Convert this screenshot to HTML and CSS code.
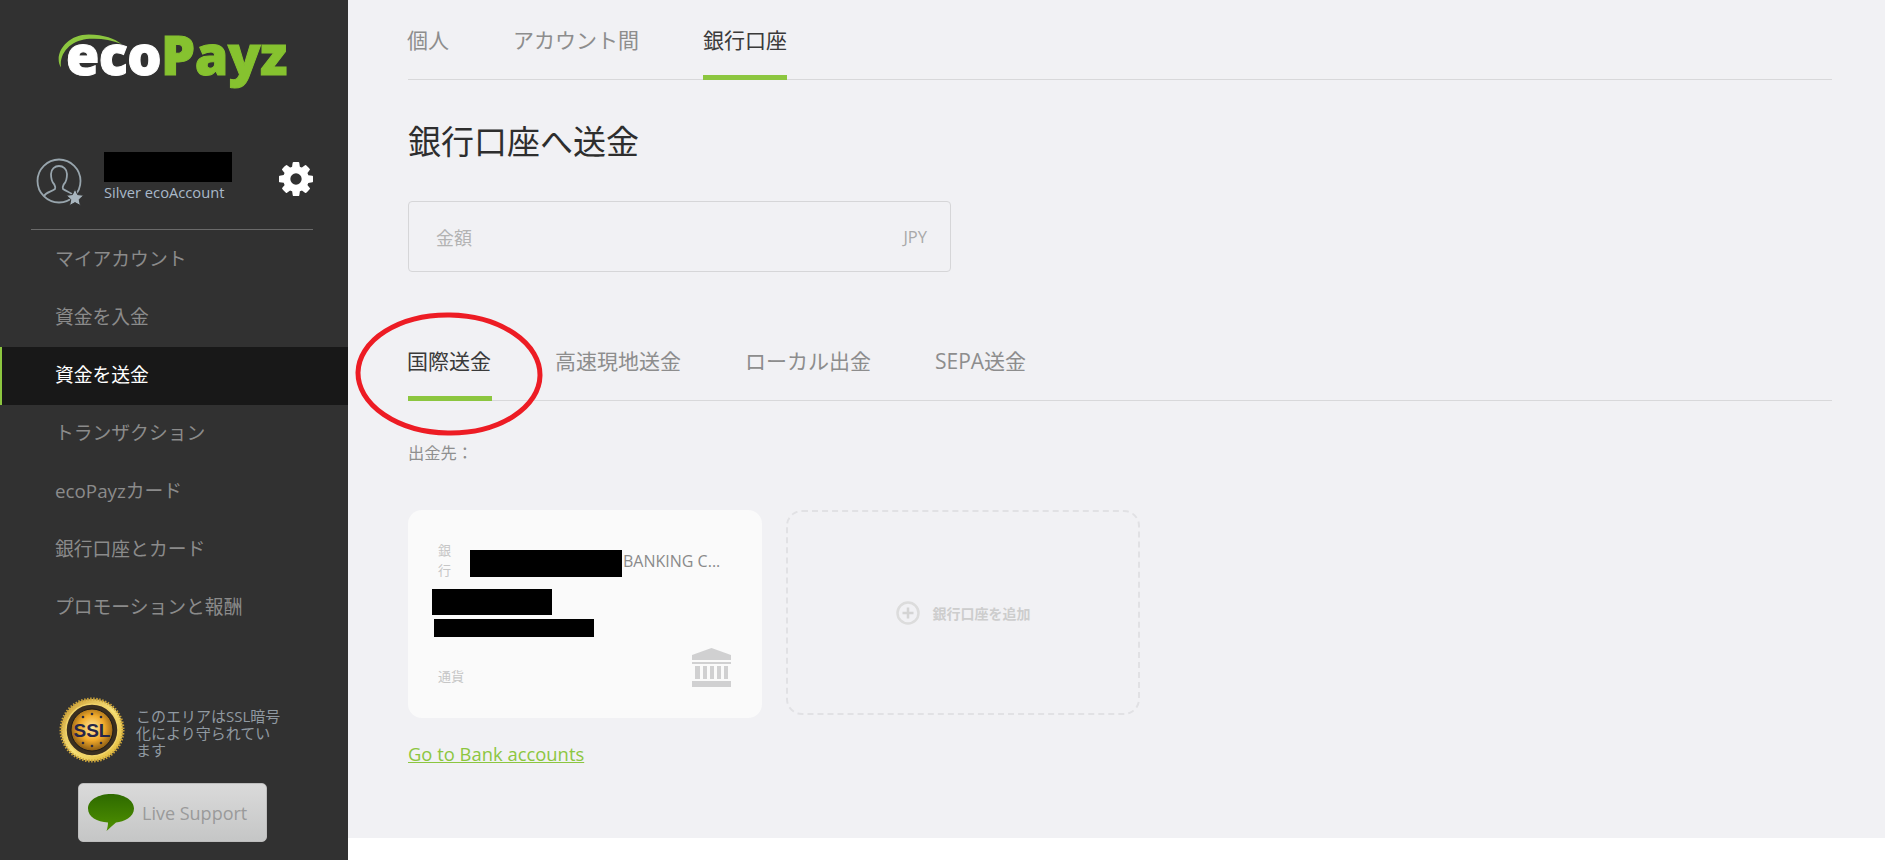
FILE: index.html
```html
<!DOCTYPE html>
<html lang="ja">
<head>
<meta charset="utf-8">
<title>ecoPayz</title>
<link rel="stylesheet" href="styles.css">
</head>
<body>
<div class="page">
  <aside class="sidebar">
    <div class="logo">
      <svg class="logo-arc" viewBox="0 0 90 40" aria-hidden="true"><path d="M8 39C-1 24 14 1 40 1c18 0 30 5 38 11C66 7 52 5 41 6 22 7 6 20 8 39z" fill="#8cc63f"/></svg>
      <span class="logo-eco">eco</span><span class="logo-payz">Payz</span>
    </div>
    <div class="user">
      <svg class="user-icon" viewBox="0 0 54 54" aria-hidden="true">
        <circle cx="23" cy="23" r="21.5" fill="none" stroke="#98a5ad" stroke-width="1.8"/>
        <path d="M8 38c2-4 7-4 11-7 1-2 0-3-1-5-2-2-3-6-3-10 0-5 4-8 8-8s8 3 8 8c0 4-1 8-3 10-1 2-2 3-1 5 3 2 6 3 9 5" fill="none" stroke="#98a5ad" stroke-width="1.8"/>
        <path d="M39 31l2.6 5.6 6.1.7-4.5 4.2 1.2 6.1-5.4-3-5.4 3 1.2-6.1-4.5-4.2 6.1-.7z" fill="#a9b6bf" stroke="#313131" stroke-width="1"/>
      </svg>
      <div class="user-info">
        <div class="redact redact-name"></div>
        <div class="user-level">Silver ecoAccount</div>
      </div>
      <svg class="gear" viewBox="128 128 1536 1536" aria-hidden="true"><path fill="#fff" d="M1152 896q0-106-75-181t-181-75-181 75-75 181 75 181 181 75 181-75 75-181zm512-109v222q0 12-8 23t-20 13l-185 28q-19 54-39 91 35 50 107 138 10 12 10 25t-9 23q-27 37-99 108t-94 71q-12 0-26-9l-138-108q-44 23-91 38-16 136-29 186-7 28-36 28h-222q-14 0-24.5-8.5t-11.5-21.5l-28-184q-49-16-90-37l-141 107q-10 9-25 9-14 0-25-11-126-114-165-168-7-10-7-23 0-12 8-23 15-21 51-66.5t54-70.5q-27-50-41-99l-183-27q-13-2-21-12.5t-8-23.5v-222q0-12 8-23t19-13l186-28q14-46 39-92-40-57-107-138-10-12-10-24 0-10 9-23 26-36 98.5-107.5t94.5-71.5q13 0 26 10l138 107q44-23 91-38 16-136 29-186 7-28 36-28h222q14 0 24.5 8.5t11.5 21.5l28 184q49 16 90 37l142-107q9-9 24-9 13 0 25 10 129 119 165 170 7 8 7 22 0 12-8 23-15 21-51 66.5t-54 70.5q26 50 41 98l183 28q13 2 21 12.5t8 23.5z"/></svg>
    </div>
    <nav class="menu">
      <a class="menu-item">マイアカウント</a>
      <a class="menu-item">資金を入金</a>
      <a class="menu-item is-active">資金を送金</a>
      <a class="menu-item">トランザクション</a>
      <a class="menu-item">ecoPayzカード</a>
      <a class="menu-item">銀行口座とカード</a>
      <a class="menu-item">プロモーションと報酬</a>
    </nav>
    <div class="ssl">
      <svg class="ssl-badge" viewBox="0 0 66 66" aria-hidden="true">
        <defs>
          <radialGradient id="sslGold" cx="50%" cy="45%" r="55%">
            <stop offset="0" stop-color="#ffe9a0"/>
            <stop offset=".55" stop-color="#f0a92a"/>
            <stop offset="1" stop-color="#8a5a12"/>
          </radialGradient>
          <linearGradient id="sslRim" x1="0" y1="0" x2="1" y2="1">
            <stop offset="0" stop-color="#c9962e"/>
            <stop offset=".5" stop-color="#f7e27a"/>
            <stop offset="1" stop-color="#e0b531"/>
          </linearGradient>
        </defs>
        <circle cx="33" cy="33" r="31" fill="url(#sslRim)" stroke="#c9a23a" stroke-width="3" stroke-dasharray="1.5 1.5"/>
        <circle cx="33" cy="33" r="26" fill="#3a2f20" stroke="#f2d469" stroke-width="1.5"/>
        <circle cx="33" cy="33" r="21" fill="url(#sslGold)" stroke="#1d1a18" stroke-width="1"/>
        <g fill="#2a2a40"><circle cx="33" cy="17" r="1.3"/><circle cx="24" cy="20" r="1.3"/><circle cx="42" cy="20" r="1.3"/><circle cx="33" cy="49" r="1.3"/><circle cx="24" cy="46" r="1.3"/><circle cx="42" cy="46" r="1.3"/></g>
        <text class="ssl-text" x="33" y="40" text-anchor="middle">SSL</text>
      </svg>
      <p class="ssl-note">このエリアはSSL暗号化により守られています</p>
    </div>
    <div class="live">
      <svg class="live-bubble" viewBox="0 0 46 37" aria-hidden="true">
        <defs><linearGradient id="bubbleGreen" x1="0" y1="0" x2="0" y2="1"><stop offset="0" stop-color="#2e6a00"/><stop offset="1" stop-color="#4f9100"/></linearGradient></defs>
        <path d="M23 0c12.500 0 23 6 23 14.500S36 28 28 28.500C25 31 22 34 18.500 37c1-3 1.500-6 1.500-8.500C9 28 0 23 0 14.500S10.500 0 23 0z" fill="url(#bubbleGreen)"/>
      </svg>
      <span class="live-text">Live Support</span>
    </div>
  </aside>

  <div class="main-wrap">
    <main class="main">
      <div class="tabs tabs-top">
        <a class="tab">個人</a>
        <a class="tab">アカウント間</a>
        <a class="tab is-active">銀行口座</a>
      </div>
      <h1 class="title">銀行口座へ送金</h1>
      <div class="amount">
        <span class="amount-label">金額</span>
        <span class="amount-cur">JPY</span>
      </div>
      <div class="tabs tabs-sub">
        <a class="tab is-active">国際送金</a>
        <a class="tab">高速現地送金</a>
        <a class="tab">ローカル出金</a>
        <a class="tab">SEPA送金</a>
      </div>
      <p class="dest">出金先：</p>
      <div class="cards">
        <div class="card">
          <div class="card-bank">
            <span class="card-label card-label-narrow">銀行</span>
            <div class="redact redact-bank"></div>
            <span class="card-bank-name">BANKING C...</span>
          </div>
          <div class="redact redact-line1"></div>
          <div class="redact redact-line2"></div>
          <div class="card-foot">
            <span class="card-label">通貨</span>
            <svg class="bank-icon" viewBox="0 0 39 39" aria-hidden="true">
              <path d="M19.500 0L39 7v5H0V7z" fill="#d0d0d1"/>
              <path d="M0 14h39v2H0zM3 18h5v13H3zM11 18h4v13h-4zM18 18h4v13h-4zM25 18h4v13h-4zM32 18h4v13h-4zM0 33h39v6H0z" fill="#d0d0d1"/>
            </svg>
          </div>
        </div>
        <div class="add-card">
          <svg class="add-icon" viewBox="0 0 24 24" aria-hidden="true">
            <circle cx="12" cy="12" r="10.500" fill="none" stroke="#dcdcdc" stroke-width="2.500"/>
            <path d="M12 6.500v11M6.500 12h11" stroke="#d4d4d4" stroke-width="2.500"/>
          </svg>
          <span class="add-text">銀行口座を追加</span>
        </div>
      </div>
      <a class="bank-link">Go to Bank accounts</a>
      <svg class="circle-mark" viewBox="0 0 190 126" aria-hidden="true">
        <ellipse cx="94" cy="63" rx="91" ry="59" fill="none" stroke="#ed1c24" stroke-width="5" transform="rotate(1 94 63)"/>
      </svg>
    </main>
  </div>
</div>
</body>
</html>
```

FILE: styles.css
```css
* { box-sizing: border-box; }
html, body { margin: 0; padding: 0; height: 100%; overflow: hidden; background: #fff; }
body { font-family: "Open Sans", "Noto Sans CJK JP", sans-serif; color: #333; }

.page { display: flex; height: 860px; }

/* sidebar */
.sidebar { width: 348px; flex: none; height: 860px; background: #313131; display: flex; flex-direction: column; }

.logo { position: relative; height: 152px; padding: 15px 0 0 66px; font-size: 54px; line-height: 78px; font-weight: 800; white-space: nowrap; letter-spacing: -.6px; -webkit-text-stroke: 1px currentColor; }
.logo-eco { color: #fff; }
.logo-payz { color: #86c22f; }
.logo-arc { position: absolute; left: 54px; top: 31px; width: 78px; height: 40px; }

.user { height: 78px; margin: 0 35px 0 31px; display: flex; align-items: flex-start; border-bottom: 1px solid #6a6a6a; }
.user-icon { width: 54px; height: 54px; margin: 6px 0 0 5px; flex: none; }
.user-info { margin-left: 14px; width: 179px; }
.redact { background: #000; }
.redact-name { width: 128px; height: 30px; }
.user-level { font-size: 14.700px; line-height: 20px; color: #a9b9c9; }
.gear { width: 34px; height: 34px; margin: 10px 0 0 0; flex: none; }

.menu { display: flex; flex-direction: column; margin-top: 1px; }
.menu-item { height: 58px; padding-left: 55px; font-size: 18.800px; line-height: 56px; color: #8b8b8b; }
.menu-item.is-active { padding-left: 53px; border-left: 2px solid #8cc63f; background: #181818; color: #fff; }

.ssl { display: flex; margin: 60px 0 0 59px; height: 66px; }
.ssl-badge { width: 66px; height: 66px; flex: none; }
.ssl-text { font-family: "Liberation Sans", sans-serif; font-weight: 700; font-size: 19px; fill: #26264a; }
.ssl-note { margin: 11px 0 0 11px; width: 147px; font-size: 15px; line-height: 17px; color: #9099a1; }

.live { display: flex; align-items: center; width: 189px; height: 59px; margin: 20px 0 0 78px; padding-left: 9px; border-radius: 5px; border: 1px solid #bdbdbd; background: linear-gradient(#dadada, #c5c6c6); }
.live-bubble { width: 46px; height: 37px; flex: none; }
.live-text { margin-left: 8px; font-size: 18px; color: #9a9a9a; white-space: nowrap; }

/* main */
.main-wrap { flex: 1; min-width: 0; }
.main { position: relative; height: 838px; padding: 0 53px 0 60px; background: #f1f1f4; }

.tabs { display: flex; gap: 64px; border-bottom: 1px solid #d8d8da; }
.tabs-top { height: 80px; padding-top: 24px; }
.tabs-sub { height: 64px; margin-top: 65px; padding-top: 8px; }
.tab { position: relative; font-size: 21px; line-height: 32px; color: #8d8d8d; white-space: nowrap; }
.tab:first-child { margin-left: -1px; }
.tab.is-active { color: #3a3a3a; }
.tabs-top .tab.is-active::after, .tabs-sub .tab.is-active::after { content: ""; position: absolute; left: 0; right: 0; height: 5px; background: #8cc63f; }
.tabs-top .tab.is-active::after { top: 51px; }
.tabs-sub .tab.is-active::after { top: 51px; left: 1px; right: -1px; }

.title { margin: 40px 0 0; font-size: 33px; line-height: 44px; font-weight: 400; color: #2e2e2e; }

.amount { display: flex; justify-content: space-between; align-items: center; width: 543px; height: 71px; margin-top: 37px; padding: 0 23px 0 27px; border: 1px solid #d6d6d8; border-radius: 4px; }
.amount-label { font-size: 18px; color: #b3b3b3; }
.amount-cur { font-size: 16.500px; color: #a9a9a9; }

.dest { margin: 40px 0 0; font-size: 16.300px; line-height: 24px; color: #8f8f8f; }

.cards { display: flex; align-items: flex-start; gap: 24px; margin-top: 45px; }
.card { width: 354px; height: 208px; padding: 30px 31px 0 30px; background: #fafafa; border-radius: 14px; }
.card-bank { display: flex; height: 40px; }
.card-label { font-size: 13px; line-height: 20px; color: #c6c6c6; }
.card-label-narrow { width: 14px; flex: none; }
.redact-bank { width: 152px; height: 27px; margin: 10px 0 0 18px; flex: none; }
.card-bank-name { margin: 10px 0 0 1px; font-size: 16px; line-height: 22px; color: #8a8a8a; white-space: nowrap; }
.redact-line1 { width: 120px; height: 26px; margin: 9px 0 0 -6px; }
.redact-line2 { width: 160px; height: 18px; margin: 4px 0 0 -4px; }
.card-foot { display: flex; justify-content: space-between; align-items: flex-end; height: 39px; margin-top: 11px; }
.card-foot .card-label { margin-bottom: 1px; }
.bank-icon { width: 39px; height: 39px; }

.add-card { display: flex; align-items: center; justify-content: center; width: 354px; height: 205px; border: 2px dashed #e1e1e4; border-radius: 16px; }
.add-icon { width: 24px; height: 24px; margin-right: 13px; flex: none; }
.add-text { font-size: 14px; font-weight: 700; color: #cdcdcd; white-space: nowrap; }

.bank-link { display: inline-block; margin-top: 23px; font-size: 18.400px; line-height: 26px; color: #8cc63f; text-decoration: underline; }

.circle-mark { position: absolute; left: 7px; top: 311px; width: 190px; height: 126px; }
```
